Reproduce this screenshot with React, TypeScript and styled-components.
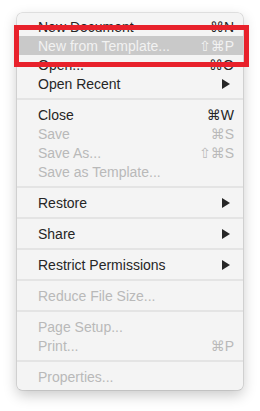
import React from 'react';
import styled, { createGlobalStyle } from 'styled-components';

const GlobalStyle = createGlobalStyle`
  html, body {
    margin: 0;
    padding: 0;
    background: #fff;
  }
  body {
    font-family: "Liberation Sans", Arial, "DejaVu Sans", sans-serif;
  }
`;

const Page = styled.div`
  position: relative;
  width: 260px;
  height: 411px;
  padding: 13px 17px 0;
  box-sizing: border-box;
`;

const Menu = styled.div`
  width: 226px;
  background: #f4f4f4;
  border-radius: 5px;
  padding: 4px 0;
  box-shadow: 0 0 0 0.5px rgba(0, 0, 0, 0.18), 0 5px 14px rgba(0, 0, 0, 0.22);
`;

const Item = styled.div<{ $disabled?: boolean; $hover?: boolean }>`
  display: flex;
  align-items: center;
  height: 19px;
  padding: 0 9px 0 21px;
  font-size: 14px;
  color: ${p => (p.$hover ? '#f2f2f2' : p.$disabled ? '#b9b9b9' : '#262626')};
  background: ${p => (p.$hover ? '#c9c9c9' : 'transparent')};
`;

const Label = styled.span`
  flex: 1;
  white-space: nowrap;
`;

const Shortcut = styled.span`
  font-family: "Liberation Sans", "DejaVu Sans", sans-serif;
  white-space: nowrap;
`;

const Arrow = styled.svg`
  width: 8px;
  height: 10px;
  margin-right: 4px;
  fill: #262626;
`;

const Separator = styled.div`
  height: 2px;
  margin: 5px 0;
  background: #e4e4e4;
`;

const Callout = styled.div`
  position: absolute;
  left: 14px;
  top: 25px;
  width: 235px;
  height: 42px;
  box-sizing: border-box;
  border: 5px solid #e8212b;
  pointer-events: none;
`;

type Entry =
  | { sep: true }
  | { sep?: false; label: string; key?: string; disabled?: boolean; sub?: boolean; hover?: boolean };

const entries: Entry[] = [
  { label: 'New Document', key: '⌘N' },
  { label: 'New from Template...', key: '⇧⌘P', hover: true },
  { label: 'Open...', key: '⌘O' },
  { label: 'Open Recent', sub: true },
  { sep: true },
  { label: 'Close', key: '⌘W' },
  { label: 'Save', key: '⌘S', disabled: true },
  { label: 'Save As...', key: '⇧⌘S', disabled: true },
  { label: 'Save as Template...', disabled: true },
  { sep: true },
  { label: 'Restore', sub: true },
  { sep: true },
  { label: 'Share', sub: true },
  { sep: true },
  { label: 'Restrict Permissions', sub: true },
  { sep: true },
  { label: 'Reduce File Size...', disabled: true },
  { sep: true },
  { label: 'Page Setup...', disabled: true },
  { label: 'Print...', key: '⌘P', disabled: true },
  { sep: true },
  { label: 'Properties...', disabled: true },
];

const App: React.FC = () => (
  <Page>
    <GlobalStyle />
    <Menu>
      {entries.map((e, i) =>
        e.sep ? (
          <Separator key={i} />
        ) : (
          <Item key={i} $disabled={e.disabled} $hover={e.hover}>
            <Label>{e.label}</Label>
            {e.key && <Shortcut>{e.key}</Shortcut>}
            {e.sub && (
              <Arrow viewBox="0 0 8 10">
                <path d="M0 0 L8 5 L0 10 Z" />
              </Arrow>
            )}
          </Item>
        )
      )}
    </Menu>
    <Callout />
  </Page>
);

export default App;
